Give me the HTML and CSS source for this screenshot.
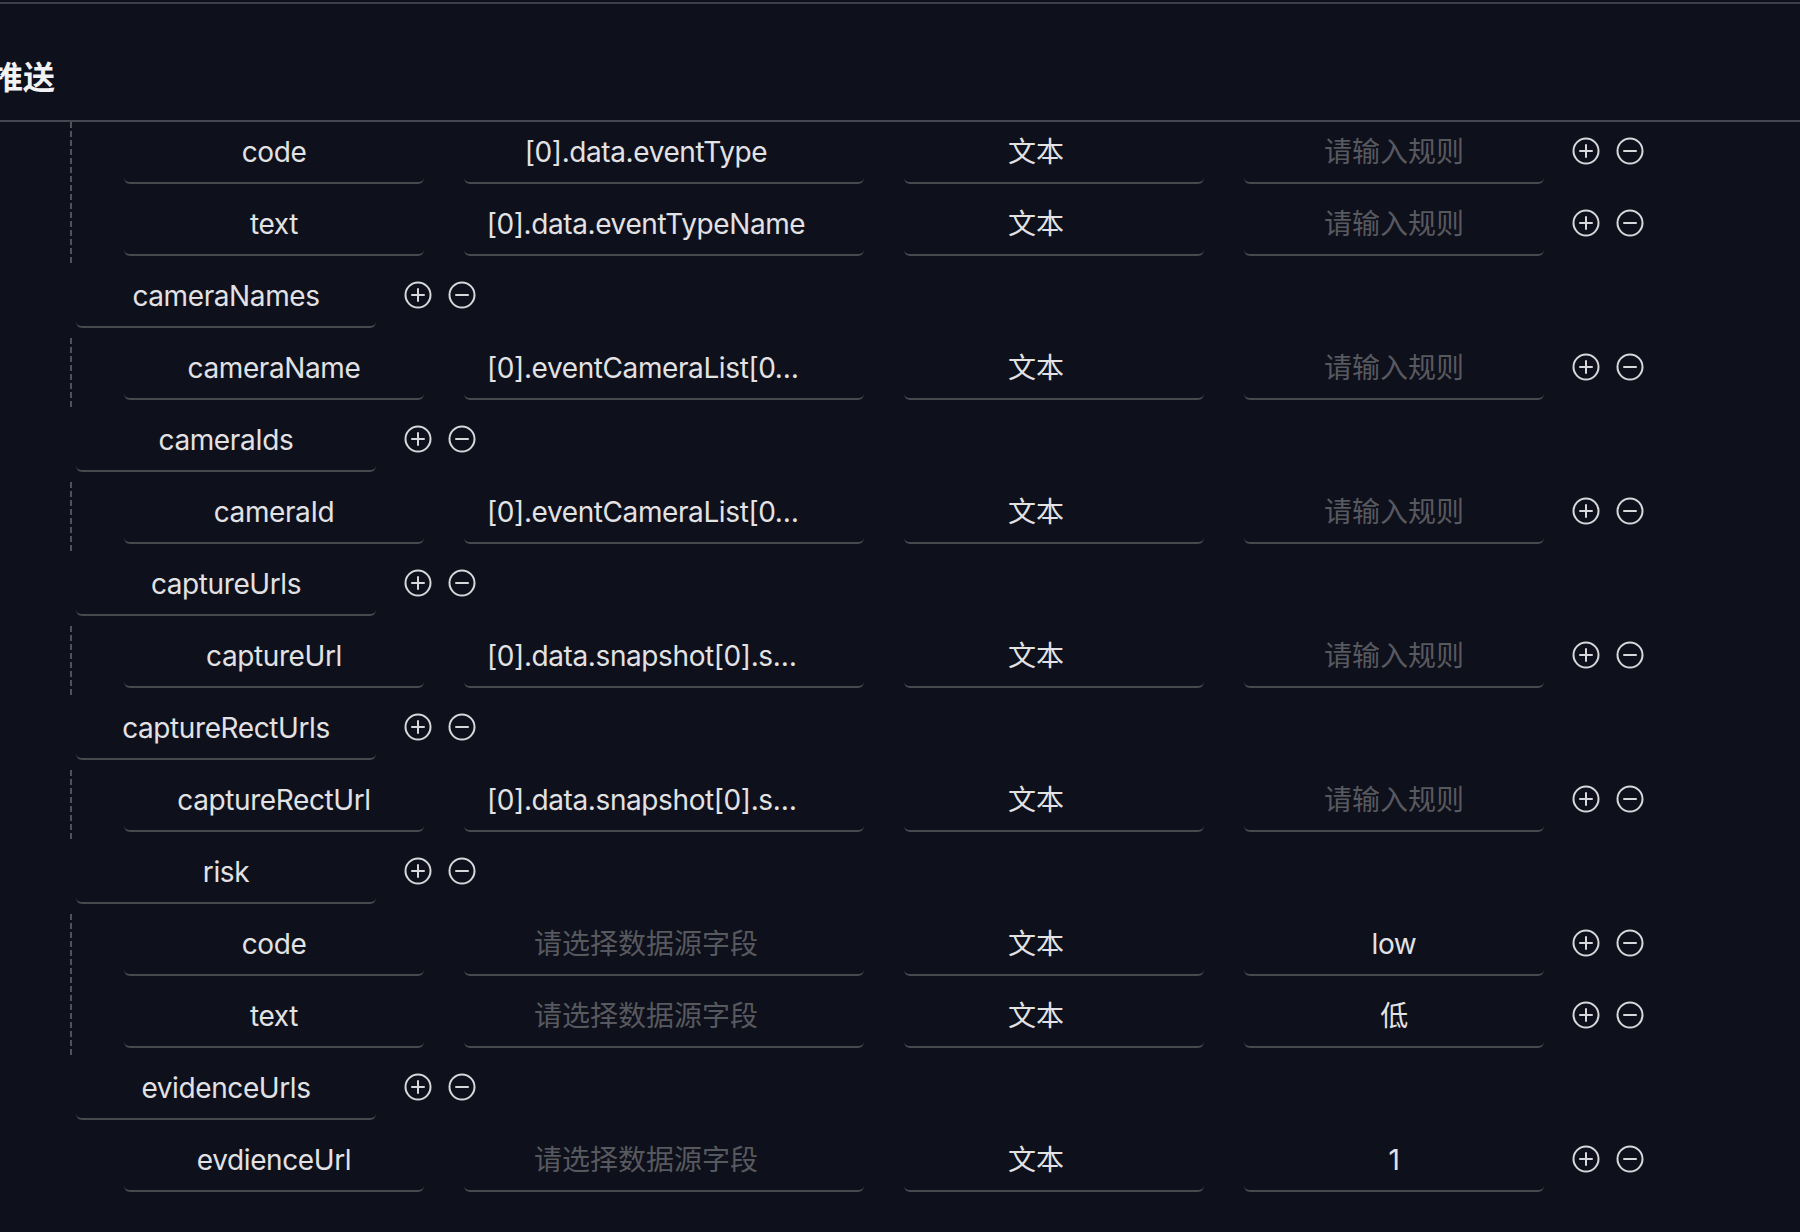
FILE: index.html
```html
<!DOCTYPE html>
<html lang="zh-CN">
<head>
<meta charset="utf-8">
<title>推送</title>
<link rel="stylesheet" href="styles.css">
</head>
<body>
<div class="page">
  <div class="topbar"></div>
  <header class="section-head"><h2 class="section-title">推送</h2></header>

  <div class="tree">
    <div class="group">
      <div class="row">
        <div class="cells">
          <div class="field field--name">code</div>
          <div class="field field--select field--source">[0].data.eventType</div>
          <div class="field field--select field--type">文本</div>
          <div class="field field--rule placeholder">请输入规则</div>
        </div>
        <div class="actions">
          <svg class="icon" viewBox="0 0 28 28"><circle cx="14" cy="14" r="12.5"/><path d="M8 14h12M14 8v12"/></svg>
          <svg class="icon" viewBox="0 0 28 28"><circle cx="14" cy="14" r="12.5"/><path d="M8 14h12"/></svg>
        </div>
      </div>
      <div class="row">
        <div class="cells">
          <div class="field field--name">text</div>
          <div class="field field--select field--source">[0].data.eventTypeName</div>
          <div class="field field--select field--type">文本</div>
          <div class="field field--rule placeholder">请输入规则</div>
        </div>
        <div class="actions">
          <svg class="icon" viewBox="0 0 28 28"><circle cx="14" cy="14" r="12.5"/><path d="M8 14h12M14 8v12"/></svg>
          <svg class="icon" viewBox="0 0 28 28"><circle cx="14" cy="14" r="12.5"/><path d="M8 14h12"/></svg>
        </div>
      </div>
    </div>

    <div class="row row--parent">
      <div class="field field--name">cameraNames</div>
      <div class="actions">
        <svg class="icon" viewBox="0 0 28 28"><circle cx="14" cy="14" r="12.5"/><path d="M8 14h12M14 8v12"/></svg>
        <svg class="icon" viewBox="0 0 28 28"><circle cx="14" cy="14" r="12.5"/><path d="M8 14h12"/></svg>
      </div>
    </div>
    <div class="group">
      <div class="row">
        <div class="cells">
          <div class="field field--name">cameraName</div>
          <div class="field field--select field--source field--clipped">[0].eventCameraList[0…</div>
          <div class="field field--select field--type">文本</div>
          <div class="field field--rule placeholder">请输入规则</div>
        </div>
        <div class="actions">
          <svg class="icon" viewBox="0 0 28 28"><circle cx="14" cy="14" r="12.5"/><path d="M8 14h12M14 8v12"/></svg>
          <svg class="icon" viewBox="0 0 28 28"><circle cx="14" cy="14" r="12.5"/><path d="M8 14h12"/></svg>
        </div>
      </div>
    </div>

    <div class="row row--parent">
      <div class="field field--name">cameraIds</div>
      <div class="actions">
        <svg class="icon" viewBox="0 0 28 28"><circle cx="14" cy="14" r="12.5"/><path d="M8 14h12M14 8v12"/></svg>
        <svg class="icon" viewBox="0 0 28 28"><circle cx="14" cy="14" r="12.5"/><path d="M8 14h12"/></svg>
      </div>
    </div>
    <div class="group">
      <div class="row">
        <div class="cells">
          <div class="field field--name">cameraId</div>
          <div class="field field--select field--source field--clipped">[0].eventCameraList[0…</div>
          <div class="field field--select field--type">文本</div>
          <div class="field field--rule placeholder">请输入规则</div>
        </div>
        <div class="actions">
          <svg class="icon" viewBox="0 0 28 28"><circle cx="14" cy="14" r="12.5"/><path d="M8 14h12M14 8v12"/></svg>
          <svg class="icon" viewBox="0 0 28 28"><circle cx="14" cy="14" r="12.5"/><path d="M8 14h12"/></svg>
        </div>
      </div>
    </div>

    <div class="row row--parent">
      <div class="field field--name">captureUrls</div>
      <div class="actions">
        <svg class="icon" viewBox="0 0 28 28"><circle cx="14" cy="14" r="12.5"/><path d="M8 14h12M14 8v12"/></svg>
        <svg class="icon" viewBox="0 0 28 28"><circle cx="14" cy="14" r="12.5"/><path d="M8 14h12"/></svg>
      </div>
    </div>
    <div class="group">
      <div class="row">
        <div class="cells">
          <div class="field field--name">captureUrl</div>
          <div class="field field--select field--source field--clipped">[0].data.snapshot[0].s…</div>
          <div class="field field--select field--type">文本</div>
          <div class="field field--rule placeholder">请输入规则</div>
        </div>
        <div class="actions">
          <svg class="icon" viewBox="0 0 28 28"><circle cx="14" cy="14" r="12.5"/><path d="M8 14h12M14 8v12"/></svg>
          <svg class="icon" viewBox="0 0 28 28"><circle cx="14" cy="14" r="12.5"/><path d="M8 14h12"/></svg>
        </div>
      </div>
    </div>

    <div class="row row--parent">
      <div class="field field--name">captureRectUrls</div>
      <div class="actions">
        <svg class="icon" viewBox="0 0 28 28"><circle cx="14" cy="14" r="12.5"/><path d="M8 14h12M14 8v12"/></svg>
        <svg class="icon" viewBox="0 0 28 28"><circle cx="14" cy="14" r="12.5"/><path d="M8 14h12"/></svg>
      </div>
    </div>
    <div class="group">
      <div class="row">
        <div class="cells">
          <div class="field field--name">captureRectUrl</div>
          <div class="field field--select field--source field--clipped">[0].data.snapshot[0].s…</div>
          <div class="field field--select field--type">文本</div>
          <div class="field field--rule placeholder">请输入规则</div>
        </div>
        <div class="actions">
          <svg class="icon" viewBox="0 0 28 28"><circle cx="14" cy="14" r="12.5"/><path d="M8 14h12M14 8v12"/></svg>
          <svg class="icon" viewBox="0 0 28 28"><circle cx="14" cy="14" r="12.5"/><path d="M8 14h12"/></svg>
        </div>
      </div>
    </div>

    <div class="row row--parent">
      <div class="field field--name">risk</div>
      <div class="actions">
        <svg class="icon" viewBox="0 0 28 28"><circle cx="14" cy="14" r="12.5"/><path d="M8 14h12M14 8v12"/></svg>
        <svg class="icon" viewBox="0 0 28 28"><circle cx="14" cy="14" r="12.5"/><path d="M8 14h12"/></svg>
      </div>
    </div>
    <div class="group">
      <div class="row">
        <div class="cells">
          <div class="field field--name">code</div>
          <div class="field field--select field--source placeholder">请选择数据源字段</div>
          <div class="field field--select field--type">文本</div>
          <div class="field field--rule">low</div>
        </div>
        <div class="actions">
          <svg class="icon" viewBox="0 0 28 28"><circle cx="14" cy="14" r="12.5"/><path d="M8 14h12M14 8v12"/></svg>
          <svg class="icon" viewBox="0 0 28 28"><circle cx="14" cy="14" r="12.5"/><path d="M8 14h12"/></svg>
        </div>
      </div>
      <div class="row">
        <div class="cells">
          <div class="field field--name">text</div>
          <div class="field field--select field--source placeholder">请选择数据源字段</div>
          <div class="field field--select field--type">文本</div>
          <div class="field field--rule">低</div>
        </div>
        <div class="actions">
          <svg class="icon" viewBox="0 0 28 28"><circle cx="14" cy="14" r="12.5"/><path d="M8 14h12M14 8v12"/></svg>
          <svg class="icon" viewBox="0 0 28 28"><circle cx="14" cy="14" r="12.5"/><path d="M8 14h12"/></svg>
        </div>
      </div>
    </div>

    <div class="row row--parent">
      <div class="field field--name">evidenceUrls</div>
      <div class="actions">
        <svg class="icon" viewBox="0 0 28 28"><circle cx="14" cy="14" r="12.5"/><path d="M8 14h12M14 8v12"/></svg>
        <svg class="icon" viewBox="0 0 28 28"><circle cx="14" cy="14" r="12.5"/><path d="M8 14h12"/></svg>
      </div>
    </div>
    <div class="group group--plain">
      <div class="row">
        <div class="cells">
          <div class="field field--name">evdienceUrl</div>
          <div class="field field--select field--source placeholder">请选择数据源字段</div>
          <div class="field field--select field--type">文本</div>
          <div class="field field--rule">1</div>
        </div>
        <div class="actions">
          <svg class="icon" viewBox="0 0 28 28"><circle cx="14" cy="14" r="12.5"/><path d="M8 14h12M14 8v12"/></svg>
          <svg class="icon" viewBox="0 0 28 28"><circle cx="14" cy="14" r="12.5"/><path d="M8 14h12"/></svg>
        </div>
      </div>
    </div>
  </div>
</div>
</body>
</html>
```

FILE: styles.css
```css
html, body {
  margin: 0;
  padding: 0;
  background: #0e101b;
}

body {
  font-family: "Inter", "Noto Sans CJK SC", sans-serif;
  color: #e2e2e5;
  overflow: hidden;
}

.page {
  min-height: 1232px;
}

.topbar {
  height: 2px;
  margin-top: 2px;
  background: #3d3f48;
}

.section-head {
  padding: 49px 0 23px;
  border-bottom: 2px solid #454750;
}

.section-title {
  margin: 0 0 0 -9px;
  font-size: 32px;
  line-height: 44px;
  font-weight: 700;
  color: #f2f2f4;
  font-family: "Noto Sans CJK SC", sans-serif;
}

.tree {
  display: flex;
  flex-direction: column;
}

.group {
  margin-left: 70px;
  padding-left: 54px;
  background-image: linear-gradient(to bottom, #50525a 6px, transparent 6px);
  background-size: 2px 9px;
  background-repeat: repeat-y;
  background-position: 0 0;
}

.group--plain {
  background-image: none;
}

.row {
  display: flex;
  align-items: center;
  margin-bottom: 10px;
}

.group .row:last-child {
  margin-bottom: 0;
  padding-bottom: 10px;
}

.row--parent {
  padding-left: 76px;
}

.cells {
  display: flex;
  gap: 40px;
}

.field {
  box-sizing: border-box;
  height: 62px;
  border-bottom: 2px solid #48494f;
  border-radius: 6px;
  display: flex;
  align-items: center;
  justify-content: center;
  font-size: 28px;
  line-height: 1;
  letter-spacing: -0.4px;
  white-space: nowrap;
  overflow: hidden;
  color: #e2e2e5;
}

.field--name {
  width: 300px;
}

.field--select {
  padding-left: 24px;
  padding-right: 60px;
}

.field--source {
  width: 400px;
}

.field--clipped {
  justify-content: flex-start;
  padding-left: 23px;
}

.field--type {
  width: 300px;
  letter-spacing: 0;
}

.field--rule {
  width: 300px;
}

.placeholder {
  color: #58595f;
  letter-spacing: 0;
}

.actions {
  display: flex;
  gap: 16px;
  margin-left: 28px;
  padding-bottom: 4px;
}

.icon {
  width: 28px;
  height: 28px;
  display: block;
  fill: none;
  stroke: #d8d8db;
  stroke-width: 2;
  stroke-linecap: round;
}
```
